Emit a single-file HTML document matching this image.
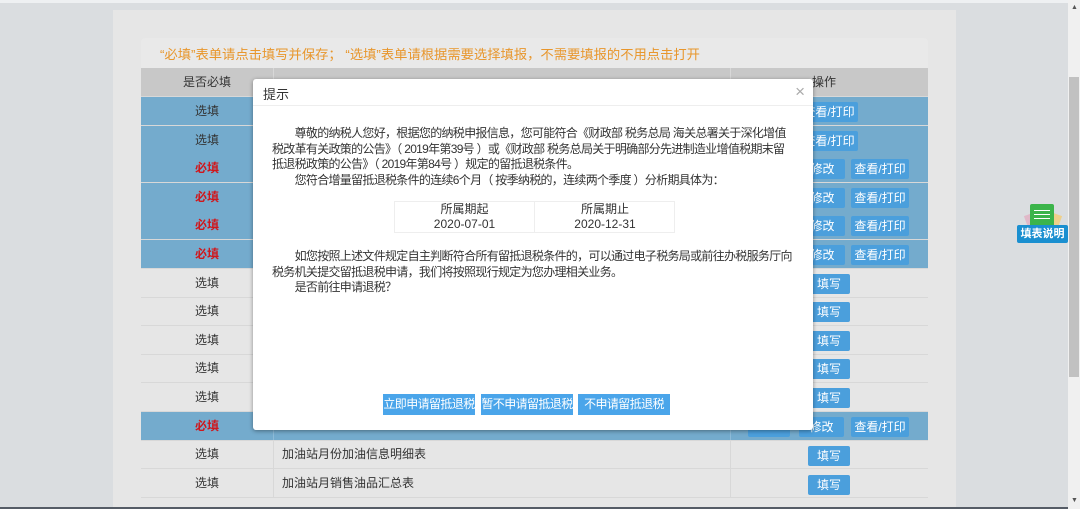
<!DOCTYPE html>
<html><head><meta charset="utf-8"><style>
*{margin:0;padding:0;box-sizing:border-box}
body{width:1080px;height:509px;overflow:hidden;background:#dadde0;font-family:"Liberation Sans","Noto Sans CJK SC",sans-serif;position:relative;font-size:12px;color:#333}
.a{position:absolute}
.panel{left:113px;top:10px;width:843px;height:499px;background:#e6e6e6}
.row{position:absolute;left:141px;width:787px;height:29px;border-bottom:1px solid #d8d8d8}
.row div{position:absolute;top:0;height:100%;line-height:28px}
.c1{left:0;width:133px;text-align:center;border-right:1px solid #d8d8d8}
.c2{left:133px;width:457px;padding-left:8px;border-right:1px solid #d8d8d8}
.blue{background:#74abcd}
.blue .c1,.blue .c2{border-color:#8dbbd8}
.red{color:#d0161b;font-weight:bold}
.btn{position:absolute;background:#4b9fdc;color:#fff;height:20px;line-height:20px;text-align:center;font-size:12px;border-radius:2px}
.modal{left:253px;top:79px;width:560px;height:351px;background:#fff;border-radius:3px;box-shadow:0 1px 4px rgba(0,0,0,.4)}
.mb{font-size:12px;color:#333;line-height:15.5px;white-space:nowrap;letter-spacing:-0.7px}
.mbtn{position:absolute;top:315px;height:21px;line-height:21px;background:#4aa5ea;color:#fff;font-size:12px;letter-spacing:-0.6px;text-align:center;white-space:nowrap;overflow:hidden}
</style></head><body>
<div class="a" style="left:0;top:0;width:1068px;height:3px;background:#eef0f2"></div>
<div class="a panel"></div>
<div class="a" style="left:141px;top:38px;width:787px;height:30px;background:#e9e9e9;border-radius:4px 4px 0 0"></div>
<div class="a" style="left:160px;top:44px;font-size:13.3px;color:#e8962c;white-space:nowrap">“必填”表单请点击填写并保存； “选填”表单请根据需要选择填报，不需要填报的不用点击打开</div>
<div class="row" style="top:68px;background:#c8c8c8"><div class="c1" style="border-color:#d8d8d8">是否必填</div><div class="c2"></div><div style="left:671px">操作</div></div>

<div class="row blue" style="top:97px"><div class="c1">选填</div><div class="c2"></div></div>
<div class="row blue" style="top:126px"><div class="c1">选填</div><div class="c2"></div></div>
<div class="row blue" style="top:154px"><div class="c1 red">必填</div><div class="c2"></div></div>
<div class="row blue" style="top:183px"><div class="c1 red">必填</div><div class="c2"></div></div>
<div class="row blue" style="top:211px"><div class="c1 red">必填</div><div class="c2"></div></div>
<div class="row blue" style="top:240px"><div class="c1 red">必填</div><div class="c2"></div></div>
<div class="row" style="top:269px"><div class="c1">选填</div><div class="c2"></div></div>
<div class="row" style="top:297px"><div class="c1">选填</div><div class="c2"></div></div>
<div class="row" style="top:326px"><div class="c1">选填</div><div class="c2"></div></div>
<div class="row" style="top:354px"><div class="c1">选填</div><div class="c2"></div></div>
<div class="row" style="top:383px"><div class="c1">选填</div><div class="c2"></div></div>
<div class="row blue" style="top:412px"><div class="c1 red">必填</div><div class="c2"></div></div>
<div class="row" style="top:440px"><div class="c1">选填</div><div class="c2">加油站月份加油信息明细表</div></div>
<div class="row" style="top:469px"><div class="c1">选填</div><div class="c2">加油站月销售油品汇总表</div></div>

<div class="btn" style="left:800px;top:102px;width:58px">查看/打印</div>
<div class="btn" style="left:800px;top:131px;width:58px">查看/打印</div>
<div class="btn" style="left:800px;top:159px;width:45px">修改</div><div class="btn" style="left:851px;top:159px;width:58px">查看/打印</div>
<div class="btn" style="left:800px;top:188px;width:45px">修改</div><div class="btn" style="left:851px;top:188px;width:58px">查看/打印</div>
<div class="btn" style="left:800px;top:216px;width:45px">修改</div><div class="btn" style="left:851px;top:216px;width:58px">查看/打印</div>
<div class="btn" style="left:800px;top:245px;width:45px">修改</div><div class="btn" style="left:851px;top:245px;width:58px">查看/打印</div>
<div class="btn" style="left:808px;top:274px;width:42px">填写</div>
<div class="btn" style="left:808px;top:302px;width:42px">填写</div>
<div class="btn" style="left:808px;top:331px;width:42px">填写</div>
<div class="btn" style="left:808px;top:359px;width:42px">填写</div>
<div class="btn" style="left:808px;top:388px;width:42px">填写</div>
<div class="btn" style="left:748px;top:417px;width:42px"></div><div class="btn" style="left:799px;top:417px;width:45px">修改</div><div class="btn" style="left:851px;top:417px;width:58px">查看/打印</div>
<div class="btn" style="left:808px;top:446px;width:42px">填写</div>
<div class="btn" style="left:808px;top:475px;width:42px">填写</div>

<div class="a modal">
 <div class="a" style="left:0;top:0;width:560px;height:27px;border-bottom:1px solid #eee;padding:5px 10px;font-size:13px">提示</div>
 <div class="a" style="right:8px;top:3px;font-size:17px;color:#aaa">×</div>
 <div class="a mb" style="left:19px;top:47px">　　尊敬的纳税人您好，根据您的纳税申报信息，您可能符合《财政部 税务总局 海关总署关于深化增值<br>税改革有关政策的公告》（ 2019年第39号 ）或《财政部 税务总局关于明确部分先进制造业增值税期末留<br>抵退税政策的公告》（ 2019年第84号 ）规定的留抵退税条件。<br>　　您符合增量留抵退税条件的连续6个月（ 按季纳税的，连续两个季度 ）分析期具体为：</div>
 <div class="a" style="left:141px;top:122px;width:281px;height:32px;border:1px solid #eee;font-size:12px;text-align:center;line-height:15px">
  <div class="a" style="left:0;top:0;width:140px;border-right:1px solid #eee;height:30px">所属期起<br>2020-07-01</div>
  <div class="a" style="left:140px;top:0;width:140px;height:30px">所属期止<br>2020-12-31</div>
 </div>
 <div class="a mb" style="left:19px;top:170px">　　如您按照上述文件规定自主判断符合所有留抵退税条件的，可以通过电子税务局或前往办税服务厅向<br>税务机关提交留抵退税申请，我们将按照现行规定为您办理相关业务。<br>　　是否前往申请退税？</div>
 <div class="mbtn" style="left:130px;width:92px">立即申请留抵退税</div>
 <div class="mbtn" style="left:228px;width:92px">暂不申请留抵退税</div>
 <div class="mbtn" style="left:325px;width:92px">不申请留抵退税</div>
</div>

<div class="a" style="left:1026px;top:214px;width:10px;height:14px;background:#e0b8c8;transform:rotate(-20deg)"></div>
<div class="a" style="left:1050px;top:214px;width:10px;height:14px;background:#efd08a;transform:rotate(20deg)"></div>
<div class="a" style="left:1030px;top:204px;width:24px;height:24px;background:#3bb44a;border-radius:2px"><div style="margin:6px 4px;height:1px;background:#fff;box-shadow:0 4px #fff,0 8px #fff"></div></div>
<div class="a" style="left:1017px;top:225px;width:51px;height:18px;background:#1a8fd0;color:#fff;font-size:11px;line-height:18px;text-align:center;font-weight:bold;border-radius:2px">填表说明</div>

<div class="a" style="left:1068px;top:0;width:12px;height:509px;background:#f0f0f0"></div>
<div class="a" style="left:1069px;top:77px;width:10px;height:300px;background:#c1c1c1"></div>
<div class="a" style="left:1071px;top:4px;font-size:7px;color:#555">▲</div>
<div class="a" style="left:1071px;top:497px;font-size:7px;color:#555">▼</div>
<div class="a" style="left:0;top:507px;width:1068px;height:2px;background:#555c66"></div>
</body></html>
